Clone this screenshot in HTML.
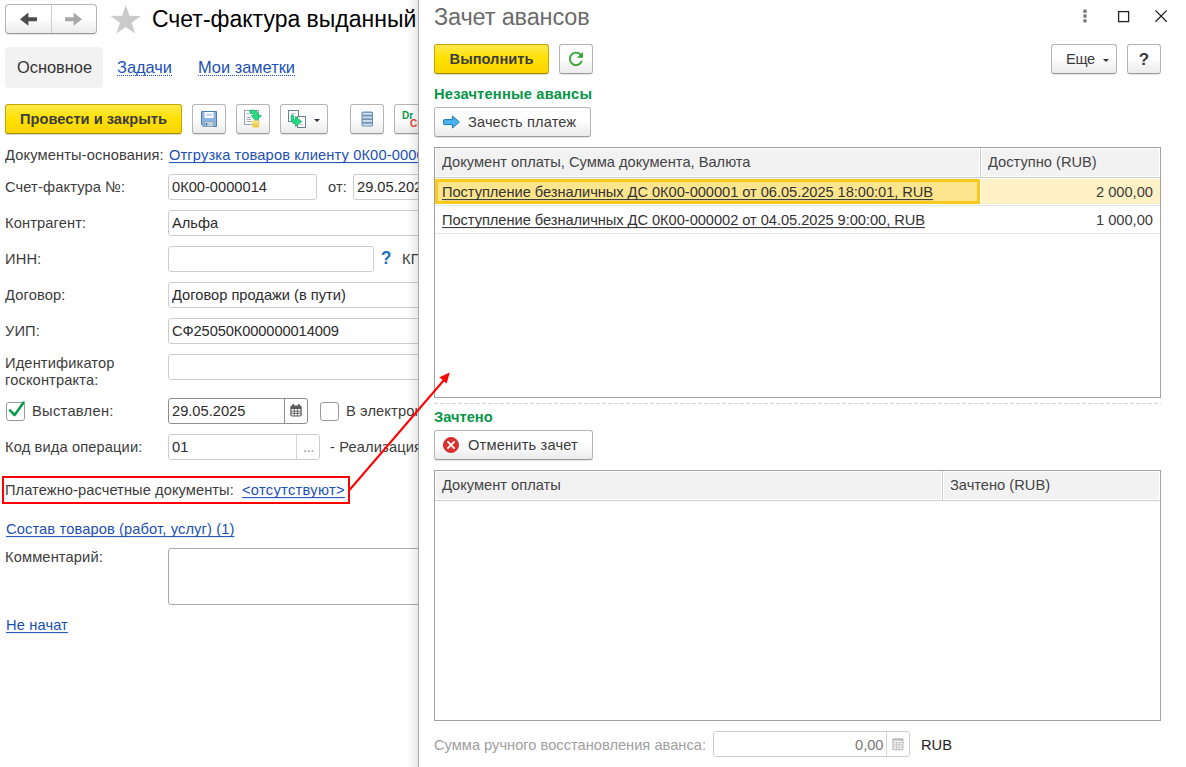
<!DOCTYPE html>
<html lang="ru">
<head>
<meta charset="utf-8">
<title>Счет-фактура выданный</title>
<style>
html,body{margin:0;padding:0;}
body{width:1186px;height:767px;overflow:hidden;background:#fff;position:relative;font-family:"Liberation Sans",Arial,sans-serif;font-size:14.67px;color:#3c3c3c;}
*{text-decoration-skip-ink:none;}
.abs{position:absolute;white-space:nowrap;}
.t{position:absolute;white-space:nowrap;line-height:18px;height:18px;transform:scaleY(1.035);transform-origin:0 14px;}
.s{display:inline-block;transform:scaleY(1.035);transform-origin:0 74%;}
.lnk{color:#1b50b5;text-decoration:underline;text-decoration-thickness:1px;text-underline-offset:2px;}
.inp{position:absolute;box-sizing:border-box;border:1px solid #cdcdcd;border-radius:3px;background:#fff;height:26px;line-height:24px;padding-left:3px;white-space:nowrap;overflow:hidden;color:#2c2c2c;}
.btn{position:absolute;box-sizing:border-box;border:1px solid #b5b5b5;border-bottom-color:#9c9c9c;border-radius:3px;background:linear-gradient(#fff 0%,#fff 45%,#ebebeb 100%);box-shadow:0 1px 0 rgba(0,0,0,.10);height:30px;}
.ybtn{position:absolute;box-sizing:border-box;border:1px solid #c7a400;border-bottom-color:#a58a00;border-radius:3px;background:linear-gradient(#ffe94d 0%,#ffe100 50%,#fbd400 100%);box-shadow:0 1px 0 rgba(0,0,0,.15);height:30px;line-height:28px;text-align:center;font-weight:bold;color:#3c3c3c;white-space:nowrap;}
#left .t{letter-spacing:.13px;}
.grn{color:#069646;font-weight:bold;}
#left{position:absolute;left:0;top:0;width:418px;height:767px;overflow:hidden;}
#shadow{position:absolute;left:407px;top:0;width:11px;height:767px;background:linear-gradient(90deg,rgba(0,0,0,0),rgba(0,0,0,.03) 40%,rgba(0,0,0,.09));}
#rbg{position:absolute;left:418px;top:0;width:768px;height:767px;background:#fff;border-left:1px solid #a6a6a6;box-sizing:border-box;}
.tbl{position:absolute;box-sizing:border-box;border:1px solid #a0a0a0;background:#fff;}
.th{position:absolute;background:#f2f2f2;height:27px;}
.ln{position:absolute;background:#cfcfcf;}
</style>
</head>
<body>
<div id="left">
  <!-- nav -->
  <div class="btn" style="left:5px;top:4px;width:92px;height:30px;border-radius:4px;"></div>
  <div class="abs" style="left:51px;top:5px;width:1px;height:28px;background:#cdcdcd;"></div>
  <svg class="abs" style="left:19px;top:11px" width="20" height="16" viewBox="0 0 20 16"><path d="M1 8.2 L9.4 1.6 V6.3 H18 V10.2 H9.4 V14.8 Z" fill="#4d4d4d"/></svg>
  <svg class="abs" style="left:64px;top:11px" width="20" height="16" viewBox="0 0 20 16"><path d="M18 8.2 L9.6 1.6 V6.3 H1 V10.2 H9.6 V14.8 Z" fill="#a8a8a8"/></svg>
  <svg class="abs" style="left:109.7px;top:4.2px" width="31.6" height="30.6" viewBox="0 0 31 30"><path d="M15.5 1 L19.1 11.6 L30.3 11.7 L21.3 18.4 L24.7 29 L15.5 22.6 L6.3 29 L9.7 18.4 L0.7 11.7 L11.9 11.6 Z" fill="#cacaca"/></svg>
  <div class="abs" style="left:152px;top:4px;font-size:23px;line-height:30px;color:#000;">Счет-фактура выданный</div>
  <!-- tabs -->
  <div class="abs" style="left:5px;top:47px;width:98px;height:41px;background:#f2f2f2;border-radius:4px;"></div>
  <div class="abs" style="left:17px;top:57px;font-size:16.4px;line-height:20px;color:#333;">Основное</div>
  <div class="abs" style="left:117px;top:57px;font-size:16.4px;line-height:20px;color:#1b50b5;border-bottom:1px dotted #1b50b5;height:18px;">Задачи</div>
  <div class="abs" style="left:198px;top:57px;font-size:16.4px;line-height:20px;color:#1b50b5;border-bottom:1px dotted #1b50b5;height:18px;">Мои заметки</div>
  <!-- toolbar -->
  <div class="ybtn" style="left:5px;top:104px;width:177px;"><span class="s">Провести и закрыть</span></div>
  <div class="btn" style="left:192px;top:104px;width:34px;"></div>
  <svg class="abs" style="left:201px;top:111px" width="16" height="16" viewBox="0 0 16 16"><path d="M0.5 0.5 H15.5 V15.5 H2.5 L0.5 13.5 Z" fill="#8ab4e4" stroke="#4a7cb8"/><rect x="3.5" y="1" width="9" height="6" fill="#fff"/><rect x="5" y="2.5" width="6" height="2.5" fill="#c9d8e8"/><rect x="3.5" y="10.5" width="9" height="5" fill="#c3d2d4" stroke="#7e9cbf" stroke-width=".6"/><rect x="4.8" y="12" width="1.4" height="2.6" fill="#3a6db3"/></svg>
  <div class="btn" style="left:236px;top:104px;width:34px;"></div>
  <svg class="abs" style="left:243px;top:109px" width="20" height="20" viewBox="0 0 20 20"><rect x="1.5" y="1.5" width="14" height="14" fill="#fff" stroke="#94a2ba"/><path d="M3.5 4.5 H6 M3.5 8.5 H8 M3.5 10.5 H8 M3.5 12.5 H9" stroke="#a8b4c6" stroke-width="1"/><path d="M7 1.4 C12 0.6 15 2 15 5.4 V6.4 H18.4 L13 12 L8.2 6.4 H11 C11 4.6 9.8 4.2 7 4.4 Z" fill="#22dc84" stroke="#16a95e" stroke-width=".8" stroke-linejoin="round"/><ellipse cx="12.8" cy="17" rx="3.7" ry="1.6" fill="#e9c43c"/><ellipse cx="12.8" cy="15" rx="3.7" ry="1.6" fill="#f3d860"/><ellipse cx="12.8" cy="13" rx="3.7" ry="1.6" fill="#f7e48a" stroke="#e2bd3a" stroke-width=".4"/></svg>
  <div class="btn" style="left:280px;top:104px;width:48px;"></div>
  <svg class="abs" style="left:287px;top:109px" width="20" height="20" viewBox="0 0 20 20"><rect x="1.5" y="1.5" width="10" height="11" fill="#fff" stroke="#6f7f95"/><rect x="10.5" y="7.5" width="8" height="11" fill="#fff" stroke="#6f7f95"/><path d="M4 4.5 H9 M13 12.5 H16 M13 15.5 H16" stroke="#c3cad6" stroke-width="1"/><path d="M4.2 6.6 C4.2 5.6 6.6 5.6 6.6 6.8 V9.6 C6.6 10.6 7.4 10.8 8.6 10.8 V7.4 L14.4 12.6 L8.6 17.6 V14.6 C5.4 14.6 4.2 13 4.2 10 Z" fill="#22dc84" stroke="#16a95e" stroke-width=".8" stroke-linejoin="round"/></svg>
  <svg class="abs" style="left:314px;top:119px" width="6" height="3" viewBox="0 0 6 3"><path d="M0 0 H6 L3 3 Z" fill="#333"/></svg>
  <div class="btn" style="left:350px;top:104px;width:34px;"></div>
  <svg class="abs" style="left:361px;top:111px" width="13" height="16" viewBox="0 0 13 16"><rect x=".5" y=".5" width="11.5" height="15" rx="1.5" fill="#6c8fb0"/><rect x="1.6" y="1.8" width="9.3" height="2" fill="#c9ddef"/><rect x="1.6" y="5.4" width="9.3" height="2" fill="#c9ddef"/><rect x="1.6" y="9" width="9.3" height="2" fill="#c9ddef"/><rect x="1.6" y="12.6" width="9.3" height="2" fill="#c9ddef"/></svg>
  <div class="btn" style="left:394px;top:104px;width:34px;"></div>
  <div class="abs" style="left:402px;top:109.5px;font-size:10px;line-height:12px;font-weight:bold;color:#0a9646;">Dr</div>
  <div class="abs" style="left:410px;top:117.5px;font-size:10px;line-height:12px;font-weight:bold;color:#e04040;">Cr</div>
  <!-- rows -->
  <div class="t" style="left:5px;top:146px;">Документы-основания:</div>
  <div class="t lnk" style="left:169px;top:146px;">Отгрузка товаров клиенту 0К00-0000014</div>
  <div class="t" style="left:5px;top:178px;">Счет-фактура №:</div>
  <div class="inp" style="left:168px;top:174px;width:149px;"><span class="s">0К00-0000014</span></div>
  <div class="t" style="left:328px;top:178px;">от:</div>
  <div class="inp" style="left:353px;top:174px;width:120px;"><span class="s">29.05.2025</span></div>
  <div class="t" style="left:5px;top:214px;">Контрагент:</div>
  <div class="inp" style="left:168px;top:210px;width:300px;"><span class="s">Альфа</span></div>
  <div class="t" style="left:5px;top:250px;">ИНН:</div>
  <div class="inp" style="left:168px;top:246px;width:206px;"></div>
  <div class="t" style="left:381px;top:250px;color:#1a73c0;font-weight:bold;font-size:17px;">?</div>
  <div class="t" style="left:402px;top:250px;">КПП:</div>
  <div class="t" style="left:5px;top:286px;">Договор:</div>
  <div class="inp" style="left:168px;top:282px;width:300px;"><span class="s">Договор продажи (в пути)</span></div>
  <div class="t" style="left:5px;top:322px;">УИП:</div>
  <div class="inp" style="left:168px;top:318px;width:300px;"><span class="s" style="letter-spacing:-.1px">СФ25050К000000014009</span></div>
  <div class="t" style="left:5px;top:354px;">Идентификатор</div>
  <div class="t" style="left:5px;top:371px;">госконтракта:</div>
  <div class="inp" style="left:168px;top:354px;width:300px;"></div>
  <div class="abs" style="left:6px;top:402px;width:19px;height:19px;box-sizing:border-box;border:1px solid #9a9a9a;border-radius:3px;background:#fff;"></div>
  <svg class="abs" style="left:6px;top:399px" width="22" height="22" viewBox="0 0 22 22"><path d="M4 11.4 L8.6 16 L17.6 3.6" fill="none" stroke="#0a9a49" stroke-width="2.5" stroke-linecap="round" stroke-linejoin="round"/></svg>
  <div class="t" style="left:32px;top:402px;letter-spacing:.3px;">Выставлен:</div>
  <div class="inp" style="left:168px;top:398px;width:140px;border-color:#8f8f8f;"><span class="s">29.05.2025</span></div>
  <div class="abs" style="left:284px;top:399px;width:1px;height:24px;background:#8f8f8f;"></div>
  <svg class="abs" style="left:290px;top:404px" width="12" height="13" viewBox="0 0 12 13"><rect x=".3" y="1.6" width="11.4" height="11" rx="1.8" fill="#5a5a5a"/><rect x="2.2" y="0" width="2" height="3" rx="1" fill="#5a5a5a"/><rect x="7.8" y="0" width="2" height="3" rx="1" fill="#5a5a5a"/><rect x="1.6" y="5" width="8.8" height="6.4" fill="#fff"/><path d="M4.4 5 V11.4 M7.4 5 V11.4 M1.6 7.2 H10.4 M1.6 9.3 H10.4" stroke="#5a5a5a" stroke-width=".9"/></svg>
  <div class="abs" style="left:320px;top:402px;width:19px;height:19px;box-sizing:border-box;border:1px solid #9a9a9a;border-radius:3px;background:#fff;"></div>
  <div class="t" style="left:346px;top:402px;">В электронном виде</div>
  <div class="t" style="left:5px;top:438px;">Код вида операции:</div>
  <div class="inp" style="left:168px;top:434px;width:152px;"><span class="s">01</span></div>
  <div class="abs" style="left:296px;top:435px;width:1px;height:24px;background:#d4d4d4;"></div>
  <div class="t" style="left:303px;top:438px;color:#8a8a8a;font-size:14.67px;letter-spacing:-.4px;">...</div>
  <div class="t" style="left:330px;top:438px;">- Реализация товаров</div>
  <div class="abs" style="left:2px;top:476px;width:348px;height:28px;box-sizing:border-box;border:2px solid #ff0000;"></div>
  <div class="t" style="left:5px;top:481px;letter-spacing:.07px;">Платежно-расчетные документы:</div>
  <div class="t lnk" style="left:242px;top:481px;letter-spacing:.3px;">&lt;отсутствуют&gt;</div>
  <div class="t lnk" style="left:6px;top:520px;letter-spacing:.12px;">Состав товаров (работ, услуг) (1)</div>
  <div class="t" style="left:5px;top:548px;">Комментарий:</div>
  <div class="inp" style="left:168px;top:548px;width:300px;height:57px;border-color:#a9a9a9;"></div>
  <div class="t lnk" style="left:6px;top:616px;">Не начат</div>
</div>
<div id="shadow"></div>
<div id="rbg"></div>
<div id="right">
  <div class="abs" style="left:434px;top:2px;font-size:23.5px;line-height:30px;color:#6b6b6b;letter-spacing:-.15px;">Зачет авансов</div>
  <svg class="abs" style="left:1078px;top:6px" width="100" height="22" viewBox="0 0 100 22"><circle cx="7" cy="5.2" r="1.9" fill="#7d7d7d"/><circle cx="7" cy="10" r="1.9" fill="#7d7d7d"/><circle cx="7" cy="14.8" r="1.9" fill="#7d7d7d"/><rect x="40.6" y="5.6" width="10" height="10" fill="none" stroke="#222" stroke-width="1.3"/><path d="M77.4 4.4 L88.8 15.8 M88.8 4.4 L77.4 15.8" stroke="#222" stroke-width="1.3" fill="none"/></svg>
  <div class="ybtn" style="left:434px;top:44px;width:115px;"><span class="s">Выполнить</span></div>
  <div class="btn" style="left:559px;top:44px;width:34px;"></div>
  <svg class="abs" style="left:567px;top:51px" width="17" height="17" viewBox="0 0 17 17"><path d="M14.9 9.8 A6.2 6.2 0 1 1 13.6 3.7" fill="none" stroke="#35a535" stroke-width="1.9"/><path d="M15.9 1.1 L16 6.7 L9.9 6.7 Z" fill="#2ea32e"/></svg>
  <div class="btn" style="left:1051px;top:44px;width:66px;"></div>
  <div class="t" style="left:1066px;top:50px;letter-spacing:-.35px;">Еще</div>
  <svg class="abs" style="left:1103px;top:59px" width="6" height="3" viewBox="0 0 6 3"><path d="M0 0 H6 L3 3 Z" fill="#333"/></svg>
  <div class="btn" style="left:1127px;top:44px;width:34px;text-align:center;line-height:30px;font-weight:bold;font-size:17px;color:#3a3a3a;">?</div>
  <div class="t grn" style="left:434px;top:85px;letter-spacing:.2px;">Незачтенные авансы</div>
  <div class="btn" style="left:434px;top:107px;width:157px;"></div>
  <svg class="abs" style="left:442.5px;top:115px" width="18" height="14" viewBox="0 0 18 14"><path d="M1.2 4.6 H9.4 V1 L16.4 7 L9.4 13 V9.6 H1.2 Q0.6 9.6 0.6 9 V5.2 Q0.6 4.6 1.2 4.6 Z" fill="#49b1ec" stroke="#1b7bbd" stroke-width="1" stroke-linejoin="round"/></svg>
  <div class="t" style="left:468px;top:113px;letter-spacing:.1px;">Зачесть платеж</div>
  <!-- table 1 -->
  <div class="tbl" style="left:434px;top:147px;width:727px;height:251px;"></div>
  <div class="th" style="left:436px;top:149px;width:543px;"></div>
  <div class="th" style="left:982px;top:149px;width:177px;"></div>
  <div class="ln" style="left:980px;top:148px;width:1px;height:29px;"></div>
  <div class="ln" style="left:435px;top:177px;width:725px;height:1px;"></div>
  <div class="t" style="left:442px;top:153px;color:#444;">Документ оплаты, Сумма документа, Валюта</div>
  <div class="t" style="left:988px;top:153px;color:#444;">Доступно (RUB)</div>
  <div class="abs" style="left:981px;top:179px;width:179px;height:25px;background:#fef1c5;"></div>
  <div class="abs" style="left:435px;top:179px;width:545px;height:25px;box-sizing:border-box;border:3px solid #f9ca1c;background:#fde58e;"></div>
  <div class="t" style="left:442px;top:183px;color:#333;text-decoration:underline;text-decoration-thickness:1px;text-underline-offset:2px;letter-spacing:-.05px;">Поступление безналичных ДС 0К00-000001 от 06.05.2025 18:00:01, RUB</div>
  <div class="t" style="right:33px;top:183px;">2 000,00</div>
  <div class="ln" style="left:435px;top:205px;width:725px;height:1px;background:#e6e6e6;"></div>
  <div class="t" style="left:442px;top:211px;color:#333;text-decoration:underline;text-decoration-thickness:1px;text-underline-offset:2px;letter-spacing:-.05px;">Поступление безналичных ДС 0К00-000002 от 04.05.2025 9:00:00, RUB</div>
  <div class="t" style="right:33px;top:211px;">1 000,00</div>
  <div class="ln" style="left:435px;top:233px;width:725px;height:1px;background:#e6e6e6;"></div>
  <div class="abs" style="left:434px;top:403px;width:727px;height:1px;background:repeating-linear-gradient(90deg,#d2d2d2 0,#d2d2d2 4px,transparent 4px,transparent 6px);"></div>
  <div class="t grn" style="left:434px;top:408px;">Зачтено</div>
  <div class="btn" style="left:434px;top:430px;width:159px;"></div>
  <svg class="abs" style="left:443px;top:437px" width="16" height="16" viewBox="0 0 16 16"><circle cx="8" cy="8" r="7.6" fill="#dd2f30" stroke="#c92022" stroke-width=".8"/><path d="M4.4 4.4 L11.6 11.6 M11.6 4.4 L4.4 11.6" stroke="#fff" stroke-width="1.9"/></svg>
  <div class="t" style="left:468px;top:436px;letter-spacing:.17px;">Отменить зачет</div>
  <!-- table 2 -->
  <div class="tbl" style="left:434px;top:470px;width:727px;height:251px;"></div>
  <div class="th" style="left:436px;top:472px;width:505px;"></div>
  <div class="th" style="left:944px;top:472px;width:215px;"></div>
  <div class="ln" style="left:942px;top:471px;width:1px;height:29px;"></div>
  <div class="ln" style="left:435px;top:500px;width:725px;height:1px;"></div>
  <div class="t" style="left:442px;top:476px;color:#444;">Документ оплаты</div>
  <div class="t" style="left:950px;top:476px;color:#444;">Зачтено (RUB)</div>
  <!-- bottom -->
  <div class="t" style="left:434px;top:736px;color:#a0a0a0;">Сумма ручного восстановления аванса:</div>
  <div class="inp" style="left:713px;top:731px;width:197px;"></div>
  <div class="t" style="left:855px;top:736px;color:#777;">0,00</div>
  <div class="abs" style="left:886px;top:732px;width:1px;height:24px;background:#d4d4d4;"></div>
  <svg class="abs" style="left:892px;top:738px" width="12" height="13" viewBox="0 0 12 13"><rect x=".3" y=".3" width="11.2" height="12" rx="1.2" fill="#bdbdbd"/><rect x="1.6" y="2.8" width="8.6" height="8.2" fill="#fff"/><path d="M4.4 4.6 V11 M7.2 4.6 V11 M1.6 4.6 H10.2 M1.6 6.8 H10.2 M1.6 9 H10.2" stroke="#bdbdbd" stroke-width=".9"/></svg>
  <div class="t" style="left:921px;top:736px;color:#222;">RUB</div>
</div>
<svg class="abs" style="left:0;top:0;pointer-events:none" width="1186" height="767" viewBox="0 0 1186 767"><path d="M349.5 490 L444 380" stroke="#ff0000" stroke-width="2" fill="none"/><path d="M449.8 372.4 L446.6 383.4 L439.4 377.3 Z" fill="#ff0000"/></svg>
</body>
</html>
